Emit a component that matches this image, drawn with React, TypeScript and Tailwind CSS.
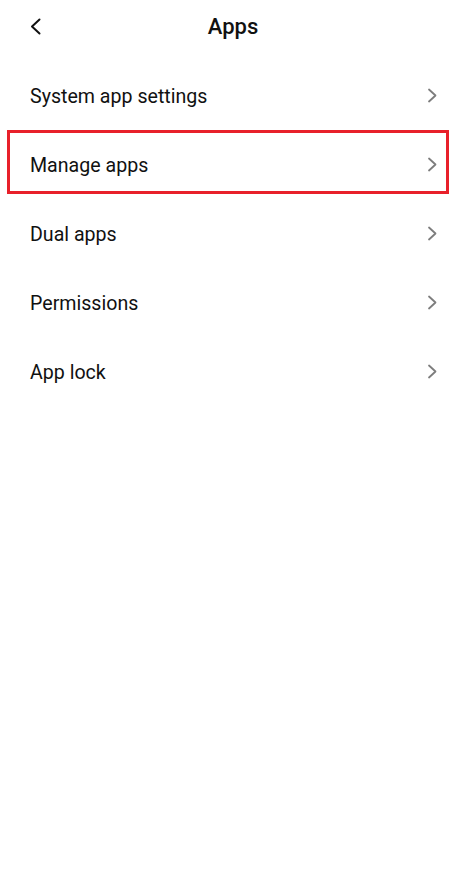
import React from "react";

const items = ["System app settings", "Manage apps", "Dual apps", "Permissions", "App lock"];

function Chevron() {
  return (
    <svg width="11" height="15" viewBox="0 0 11 15" fill="none">
      <path d="M2 1.5 L8.5 7.5 L2 13.5" stroke="#7d7d7d" strokeWidth="1.8" strokeLinecap="round" strokeLinejoin="round" />
    </svg>
  );
}

export default function App() {
  return (
    <div className="w-[456px] h-[893px] bg-white text-[#111]" style={{ fontFamily: "Roboto, 'Noto Sans', sans-serif" }}>
      <div className="relative h-[52px] flex items-center justify-center">
        <div className="absolute left-[29px] top-[18px]">
          <svg width="13" height="17" viewBox="0 0 13 17" fill="none">
            <path d="M10.5 1.5 L3 8.5 L10.5 15.5" stroke="#111" strokeWidth="2" strokeLinecap="round" strokeLinejoin="round" />
          </svg>
        </div>
        <span className="text-[22px] font-medium leading-none ml-[10px] mt-[1px]">Apps</span>
      </div>
      <div className="mt-[9px] flex flex-col">
        {items.map((t, i) => (
          <div key={t} className="relative h-[69px] flex items-center justify-between pl-[30px] pr-[18px]">
            <span className="text-[19.6px] leading-none mt-[3px]">{t}</span>
            <Chevron />
            {i === 1 && (
              <div className="absolute left-[7px] right-[7px] top-0 h-[64px] border-[3px] border-[#e8202a]" />
            )}
          </div>
        ))}
      </div>
    </div>
  );
}
